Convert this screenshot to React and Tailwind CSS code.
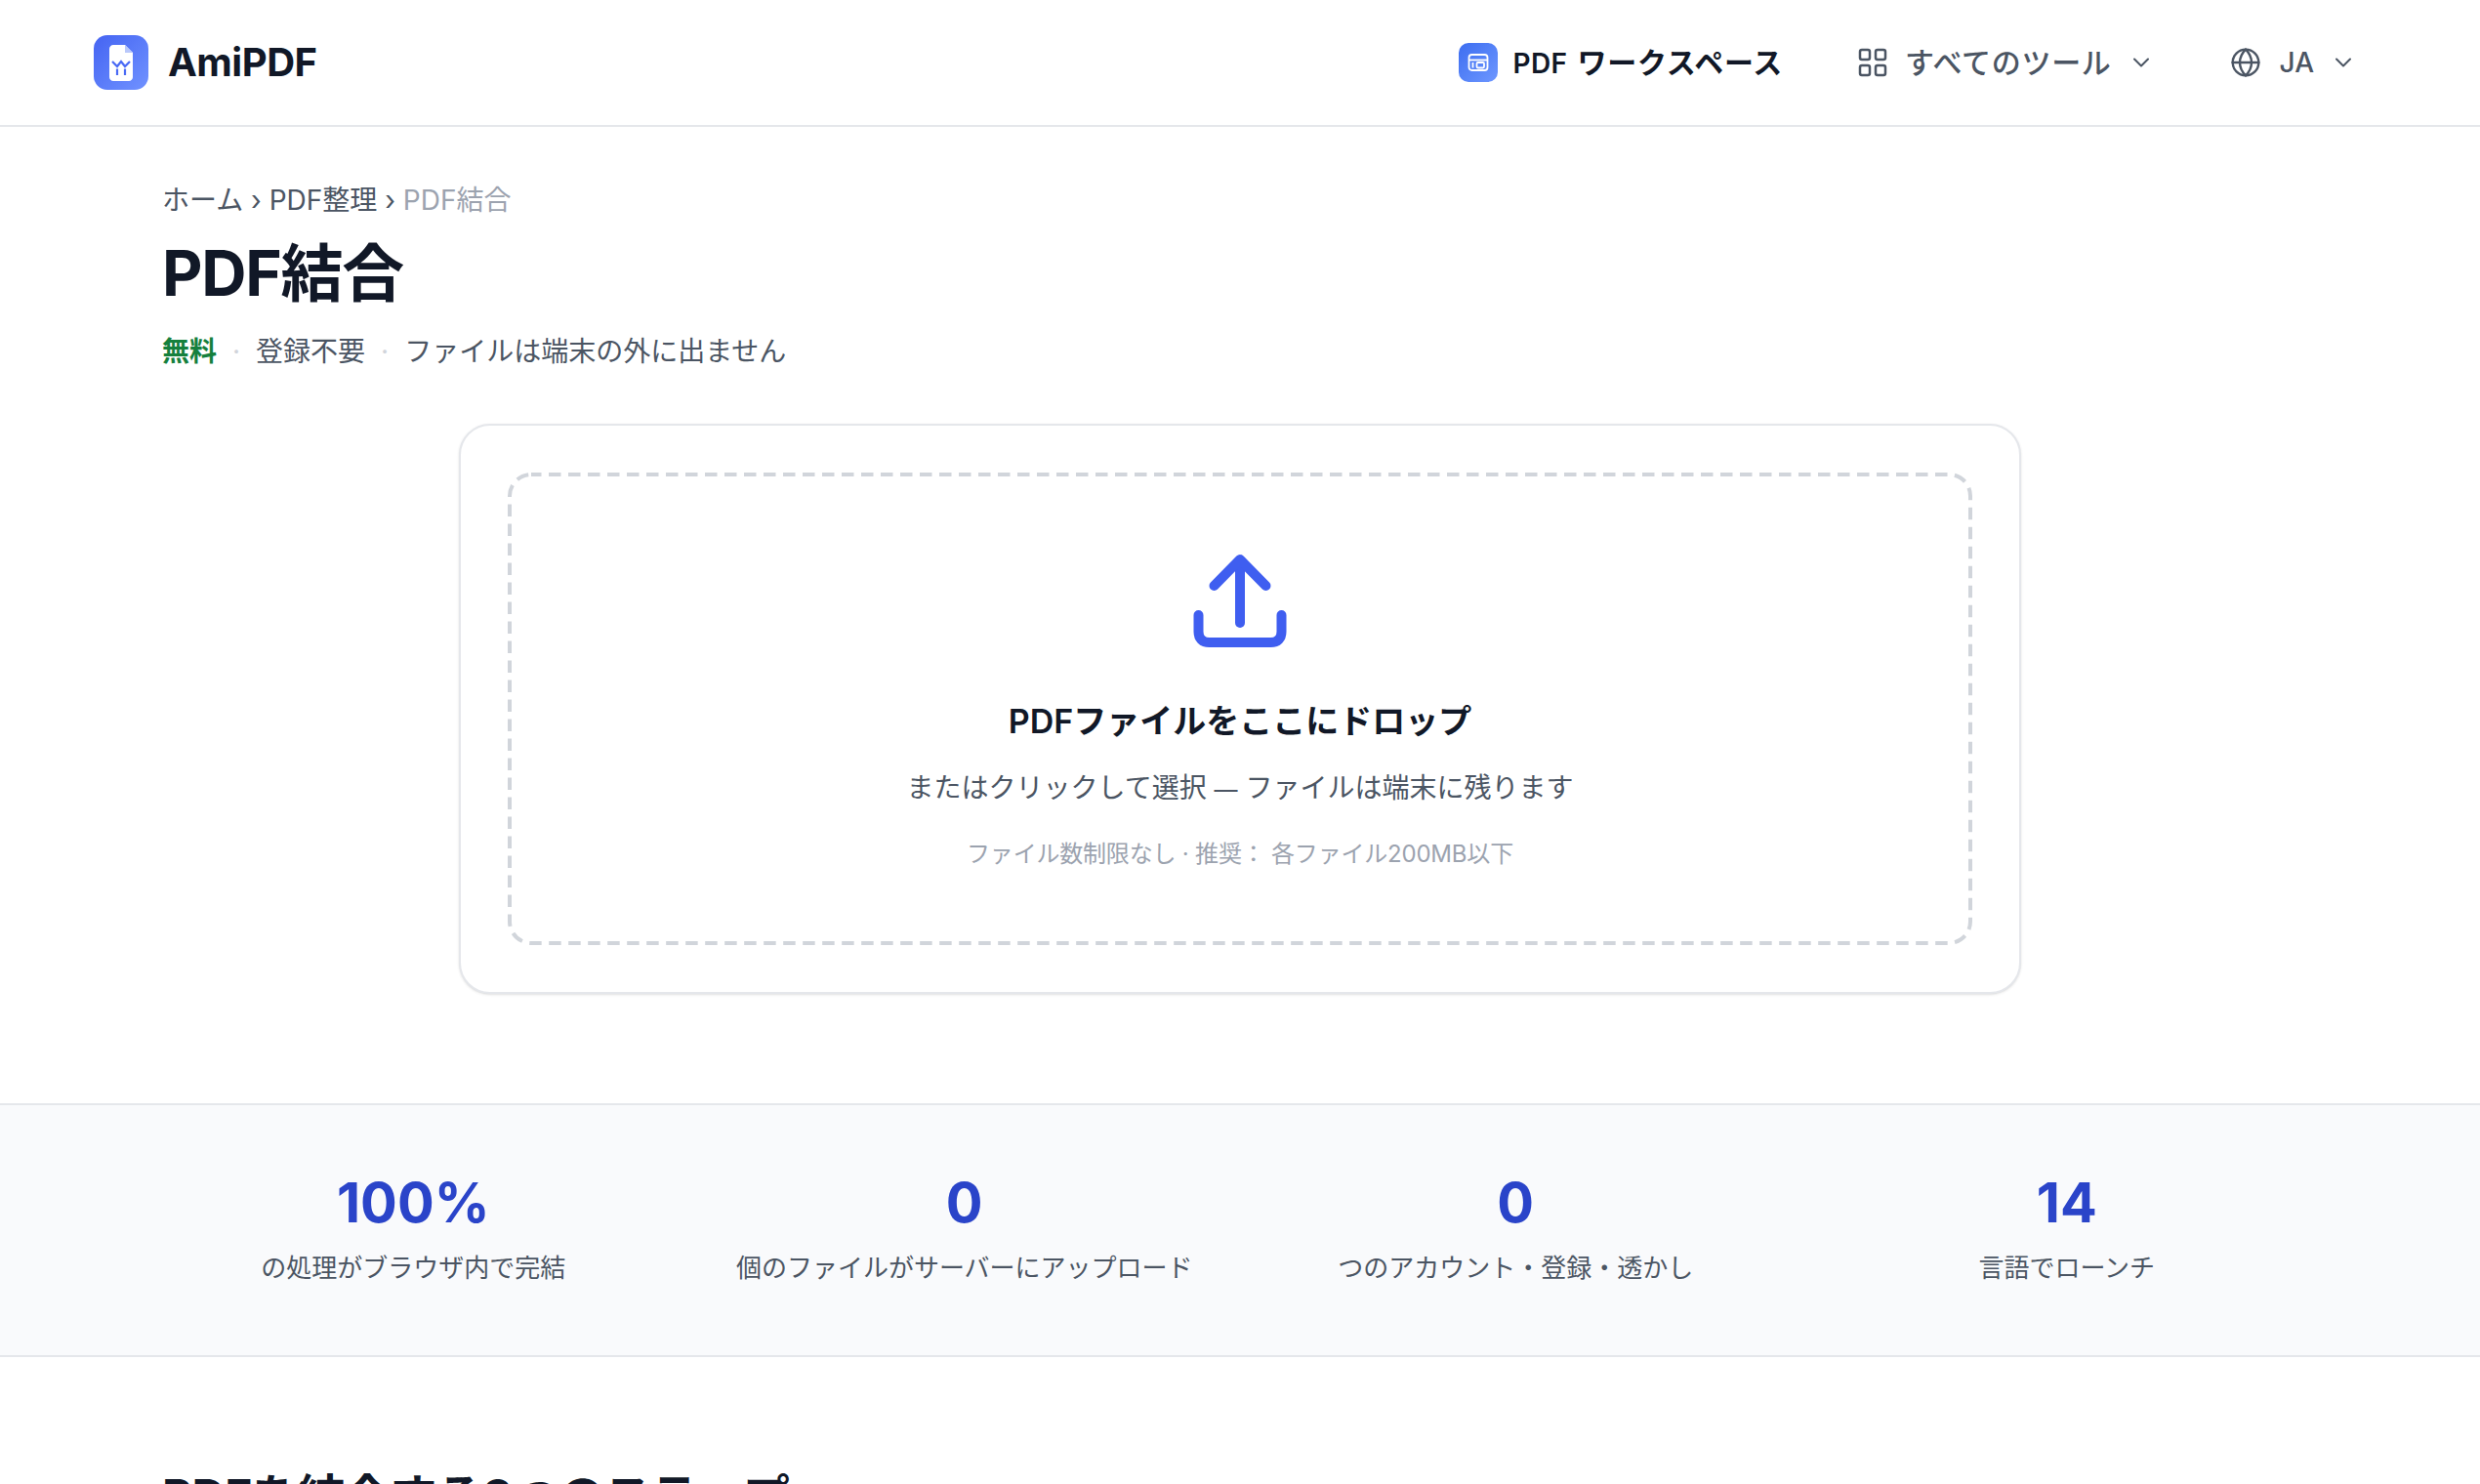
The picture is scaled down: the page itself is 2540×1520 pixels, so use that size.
function Upload() {
  return (
    <svg width="96" height="96" viewBox="0 0 96 96" fill="none" stroke="#3f5ef0" strokeWidth="10" strokeLinecap="round" strokeLinejoin="round">
      <path d="M48 70V6" />
      <path d="M21.500 32L48 5L74.500 32" />
      <path d="M5.500 62V79C5.500 86 9.500 90 16.500 90H79.500C86.500 90 90.500 86 90.500 79V62" />
    </svg>
  );
}
function Logo() {
  return (
    <div className="flex h-14 w-14 items-center justify-center rounded-[14px] bg-gradient-to-br from-[#4563f2] to-[#7192ff]">
      <svg width="24" height="37" viewBox="0 0 24 37">
        <path d="M4 0H16L24 8V33C24 35.200 22.200 37 20 37H4C1.800 37 0 35.200 0 33V4C0 1.800 1.800 0 4 0Z" fill="#fff" />
        <path d="M16 0V8H24Z" fill="#b9c8fb" />
        <path d="M3 17L8 22L12 17L16 22L21 17" stroke="#4a6af5" strokeWidth="2.200" fill="none" />
        <path d="M8 24.500V31M16 24.500V31" stroke="#4a6af5" strokeWidth="2.200" fill="none" />
      </svg>
    </div>
  );
}
function Work() {
  return (
    <div className="flex h-10 w-10 items-center justify-center rounded-[10px] bg-gradient-to-br from-[#3d6df0] to-[#6e97ff]">
      <svg width="24" height="24" viewBox="0 0 24 24" fill="none" stroke="#fff" strokeWidth="1.800" strokeLinejoin="round">
        <rect x="2.500" y="4" width="19" height="16" rx="3" />
        <path d="M2.500 9.500H21.500" />
        <path d="M6.500 12V17.500" />
        <rect x="10.500" y="12" width="7.500" height="5.500" rx="1.200" />
      </svg>
    </div>
  );
}
function Grid() {
  return (
    <svg width="32" height="32" viewBox="0 0 32 32" fill="none" stroke="#4b5563" strokeWidth="2.500">
      <rect x="3" y="3" width="10" height="10" rx="2" />
      <rect x="19" y="3" width="10" height="10" rx="2" />
      <rect x="3" y="19" width="10" height="10" rx="2" />
      <rect x="19" y="19" width="10" height="10" rx="2" />
    </svg>
  );
}
function Globe() {
  return (
    <svg width="32" height="32" viewBox="0 0 24 24" fill="none" stroke="#4b5563" strokeWidth="1.800" strokeLinecap="round">
      <circle cx="12" cy="12" r="10" />
      <path d="M2 12H22" />
      <path d="M12 2C15 5 16.500 8.500 16.500 12C16.500 15.500 15 19 12 22C9 19 7.500 15.500 7.500 12C7.500 8.500 9 5 12 2Z" />
    </svg>
  );
}
function Chevron() {
  return (
    <svg width="20" height="12" viewBox="0 0 20 12" fill="none" stroke="#4b5563" strokeWidth="2" strokeLinecap="round" strokeLinejoin="round">
      <path d="M3 2.500L10 9.500L17 2.500" />
    </svg>
  );
}
const stats = [
  ["100%", "の処理がブラウザ内で完結"],
  ["0", "個のファイルがサーバーにアップロード"],
  ["0", "つのアカウント・登録・透かし"],
  ["14", "言語でローンチ"],
];
export default function App() {
  return (
    <div className="min-h-[1520px] overflow-hidden bg-white font-['Inter','Noto_Sans_CJK_JP',sans-serif] text-[#111827]">
      <header className="flex h-[130px] items-center justify-between border-b-2 border-[#e5e7eb] pl-[96px] pr-[130px]">
        <div className="flex items-center gap-5">
          <Logo />
          <span className="text-[40px] font-bold leading-none tracking-[-0.5px]">AmiPDF</span>
        </div>
        <nav className="flex items-center text-[28px] leading-none">
          <div className="flex items-center gap-4 font-semibold">
            <Work />
            <span className="tracking-[0.3px]">PDF <span className="ml-[3px] text-[30px] tracking-[0.7px]">ワークスペース</span></span>
          </div>
          <div className="ml-[76px] flex items-center gap-[17px] text-[#4b5563]">
            <Grid />
            <span className="text-[30px] font-medium tracking-[0.7px]">すべてのツール</span>
            <span className="ml-[3px]"><Chevron /></span>
          </div>
          <div className="ml-[81px] flex items-center gap-[19px] text-[#4b5563]">
            <Globe />
            <span className="font-medium">JA</span>
            <span className="ml-[1px]"><Chevron /></span>
          </div>
        </nav>
      </header>
      <main className="pl-[166px]">
        <div className="pt-[57px] text-[28px] leading-[36px] text-[#4b5563]">
          ホーム <span>›</span> PDF整理 <span>›</span> <span className="text-[#9ca3af]">PDF結合</span>
        </div>
        <h1 className="mt-[21px] text-[64px] font-bold leading-[72px] tracking-[-0.02em]">PDF結合</h1>
        <div className="mt-[24px] flex items-center gap-4 text-[28px] leading-[40px] text-[#4b5563]">
          <span className="font-bold text-[#15803d]">無料</span>
          <span className="text-[#d1d5db]">·</span>
          <span>登録不要</span>
          <span className="text-[#d1d5db]">·</span>
          <span>ファイルは端末の外に出ません</span>
        </div>
      </main>
      <section className="mx-auto mt-[54px] box-border h-[584px] w-[1600px] rounded-[32px] border-2 border-[#e5e7eb] bg-white p-[48px] shadow-sm">
        <div className="relative flex h-full flex-col items-center pt-[84px]">
          <svg className="absolute inset-0" width="1500" height="484" viewBox="0 0 1500 484" fill="none">
            <rect x="2" y="2" width="1496" height="480" rx="22" stroke="#d1d5db" strokeWidth="4" strokeDasharray="12.500 7.500" strokeDashoffset="2" />
          </svg>
          <Upload />
          <div className="mt-[53px] text-[34px] font-semibold leading-[44px]">PDFファイルをここにドロップ</div>
          <div className="mt-[26px] text-[28px] leading-[40px] text-[#4b5563]">またはクリックして選択 <span className="text-[24px]">—</span> ファイルは端末に残ります</div>
          <div className="mt-[30px] text-[24px] leading-[32px] tracking-[-0.2px] text-[#9ca3af]">ファイル数制限なし · 推奨： 各ファイル200MB以下</div>
        </div>
      </section>
      <section className="mt-[112px] box-border h-[260px] border-y-2 border-[#e5e7eb] bg-[#f9fafc] px-[141px] pb-[3px]">
        <div className="grid h-full grid-cols-4 items-center">
          {stats.map(([n, l], i) => (
            <div key={i} className="text-center">
              <div className="text-[56px] font-bold leading-[64px] text-[#2a44c9]">{n}</div>
              <div className="mt-[17px] text-[26px] leading-[36px] text-[#4b5563]">{l}</div>
            </div>
          ))}
        </div>
      </section>
      <h2 className="ml-[166px] mt-[115px] text-[48px] font-bold leading-[56px] tracking-[-0.015em]">PDFを結合する3つのステップ</h2>
    </div>
  );
}
